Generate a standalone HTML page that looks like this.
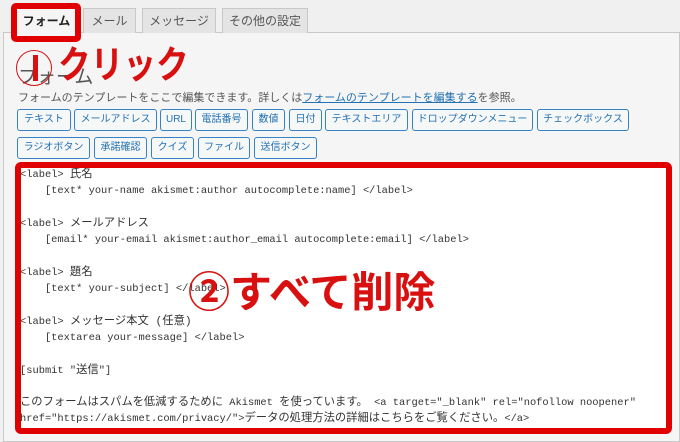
<!DOCTYPE html>
<html><head><meta charset="utf-8"><style>
*{margin:0;padding:0;box-sizing:border-box}
body{width:680px;height:435px;background:#f0f0f0;position:relative;overflow:hidden;font-family:"Liberation Sans","Noto Sans CJK JP",sans-serif}
.panel{position:absolute;left:3px;top:32px;width:677px;height:410px;background:#f5f5f5;border:1px solid #c8c8c8}
.tab{position:absolute;top:8px;height:25px;border:1px solid #c8c8c8;border-bottom:none;background:#e4e4e4;color:#555;font-size:12px;line-height:24px;text-align:center}
.tab.a{background:#f5f5f5;color:#222;font-weight:bold;height:26px}
.btn{position:absolute;height:22px;border:1px solid #3582c4;border-radius:3px;background:#f6f7f7;color:#2271b1;font-size:10px;line-height:20px;text-align:center;white-space:nowrap}
.red{color:#d81010;font-weight:bold;position:absolute;white-space:nowrap;transform-origin:0 0}
.box{position:absolute;left:15px;top:162px;width:657px;height:272px;border:6px solid #e00000;border-radius:6px;background:#fff;overflow:hidden}
.code{position:absolute;left:-1px;top:-1px;font-family:"Liberation Mono","Noto Sans CJK JP",monospace;font-size:10.4px;line-height:16.3px;color:#333;white-space:pre}
.code .j{font-size:11.3px}
</style></head><body>
<div class="panel"></div>
<div class="tab a" style="left:15px;width:63px">フォーム</div>
<div class="tab" style="left:83px;width:53px">メール</div>
<div class="tab" style="left:142px;width:74px">メッセージ</div>
<div class="tab" style="left:222px;width:86px">その他の設定</div>
<div style="position:absolute;left:11px;top:3px;width:70px;height:39px;border:6px solid #e00000;border-radius:5px"></div>
<div style="position:absolute;left:18px;top:62px;font-size:19px;color:#555">フォーム</div>
<div style="position:absolute;left:16px;top:50px;width:36px;height:36px;border:1.5px solid #d81010;border-radius:50%"></div>
<div style="position:absolute;left:33px;top:55px;width:5px;height:26px;background:#d81010"></div>
<div class="red" style="left:58px;top:43px;font-size:38px;line-height:46px;transform:scaleX(0.86)">クリック</div>
<div style="position:absolute;left:18px;top:89px;font-size:11px;color:#555;white-space:nowrap">フォームのテンプレートをここで編集できます。詳しくは<span style="color:#2271b1;text-decoration:underline">フォームのテンプレートを編集する</span>を参照。</div>
<div class="btn" style="left:17px;top:109px;width:54px">テキスト</div>
<div class="btn" style="left:74px;top:109px;width:83px">メールアドレス</div>
<div class="btn" style="left:160px;top:109px;width:32px">URL</div>
<div class="btn" style="left:195px;top:109px;width:53px">電話番号</div>
<div class="btn" style="left:252px;top:109px;width:33px">数値</div>
<div class="btn" style="left:289px;top:109px;width:33px">日付</div>
<div class="btn" style="left:325px;top:109px;width:83px">テキストエリア</div>
<div class="btn" style="left:412px;top:109px;width:121px">ドロップダウンメニュー</div>
<div class="btn" style="left:537px;top:109px;width:92px">チェックボックス</div>
<div class="btn" style="left:17px;top:137px;width:73px">ラジオボタン</div>
<div class="btn" style="left:94px;top:137px;width:53px">承諾確認</div>
<div class="btn" style="left:151px;top:137px;width:43px">クイズ</div>
<div class="btn" style="left:198px;top:137px;width:52px">ファイル</div>
<div class="btn" style="left:254px;top:137px;width:63px">送信ボタン</div>
<div class="box"><div class="code">&lt;label&gt; <span class="j">氏名</span>
    [text* your-name akismet:author autocomplete:name] &lt;/label&gt;

&lt;label&gt; <span class="j">メールアドレス</span>
    [email* your-email akismet:author_email autocomplete:email] &lt;/label&gt;

&lt;label&gt; <span class="j">題名</span>
    [text* your-subject] &lt;/label&gt;

&lt;label&gt; <span class="j">メッセージ本文 (任意)</span>
    [textarea your-message] &lt;/label&gt;

[submit "<span class="j">送信</span>"]

<span class="j">このフォームはスパムを低減するために</span> Akismet <span class="j">を使っています。</span> &lt;a target="_blank" rel="nofollow noopener"
href="https://akismet.com/privacy/"&gt;<span class="j">データの処理方法の詳細はこちらをご覧ください。</span>&lt;/a&gt;</div></div>
<div class="red" style="left:188px;top:268px;font-size:42px;line-height:50px">②すべて削除</div>
</body></html>
